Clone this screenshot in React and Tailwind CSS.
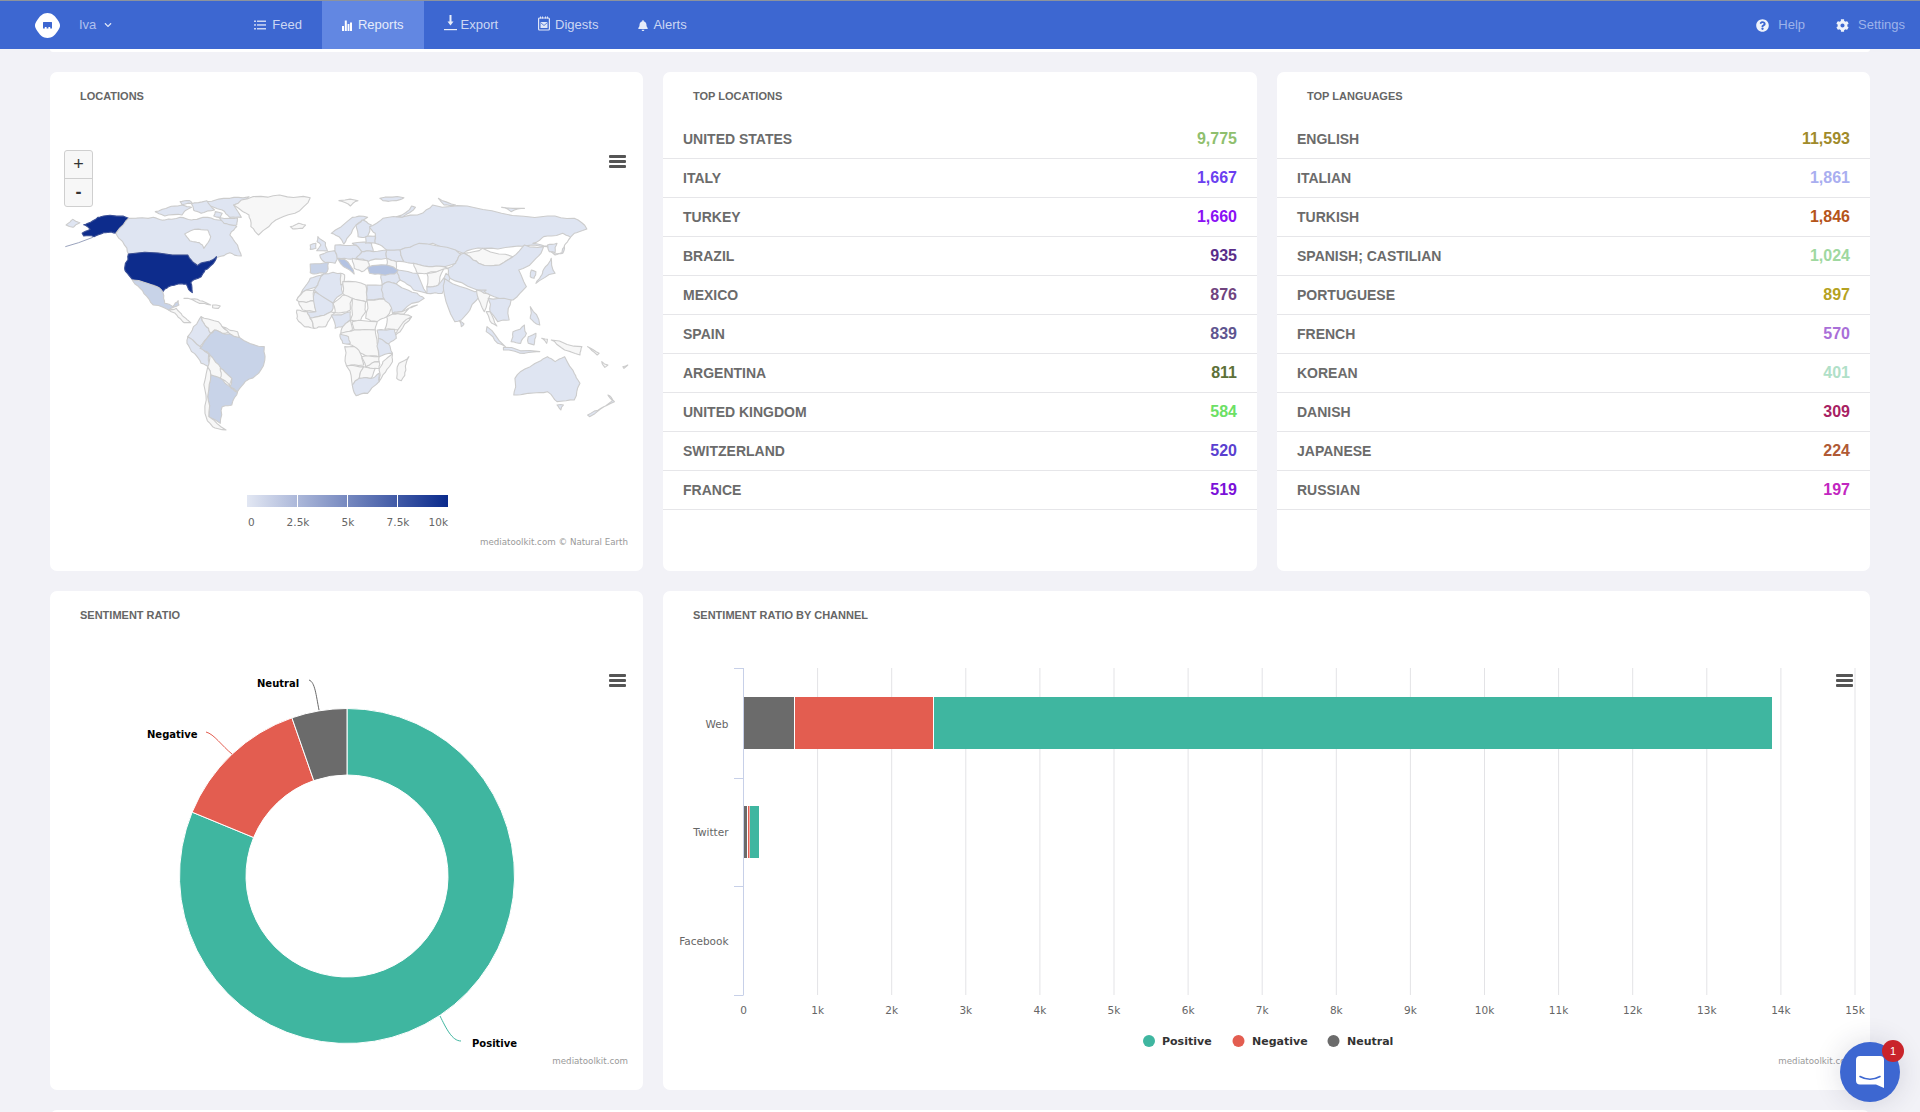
import React from "react";
import { FaBell, FaCog, FaQuestionCircle, FaChevronDown } from "react-icons/fa";

const D = "#f7f7f7", L = "#dfe5f2", M = "#c8d3e8", H = "#b4c3e2", U = "#0d2c8c", W = "#ffffff";

const LAND = [
  [U, "140,258 205,265 172,310 160,306 140,308 115,320 88,318 84,310 105,298 88,284 112,272 125,262"],
  [L, "42,285 60,268 78,278 60,292"],
  [L, "205,265 270,262 300,270 340,262 370,270 400,262 440,270 470,275 488,290 470,315 490,345 500,378 470,368 438,382 420,400 385,408 372,395 360,375 205,372 190,335 172,310"],
  [W, "352,312 378,298 412,300 420,320 402,355 390,338 365,332"],
  [L, "410,215 470,205 520,200 480,225 500,262 470,262 450,240 405,225"],
  [L, "275,245 310,232 345,225 370,232 345,255 300,258"],
  [L, "370,222 410,212 430,240 395,250 375,240"],
  [L, "440,262 490,264 488,285 455,280"],
  [L, "340,215 365,212 372,220 345,224"],
  [L, "432,245 450,250 445,262 428,258"],
  [D, "480,225 530,200 600,195 680,203 640,250 590,270 545,315 525,290 520,255"],
  [D, "628,290 650,280 668,285 660,295 635,297"],
  [U, "205,372 360,375 372,395 385,407 410,395 435,380 430,395 405,420 395,440 368,458 372,488 362,478 356,462 335,462 310,470 295,485 272,465 235,458 215,448 198,425 197,400"],
  [M, "215,450 272,467 295,487 300,520 320,530 335,512 337,525 310,540 270,525 245,490 222,462"],
  [D, "310,540 330,535 340,548 355,565 368,578 350,578 335,562"],
  [D, "350,505 385,508 420,525 390,520"],
  [D, "425,525 445,528 440,535 425,533"],
  [L, "375,590 395,560 405,585 420,610 410,625 392,650 360,620 372,600"],
  [D, "395,560 440,575 450,590 470,605 450,610 430,600 420,610 405,585"],
  [D, "450,590 490,605 495,622 470,612 465,605"],
  [L, "360,620 392,650 415,672 415,712 395,700 370,665 358,640"],
  [M, "392,655 410,625 430,600 450,610 470,612 495,622 560,650 562,680 545,730 510,755 490,785 470,770 475,745 445,715 415,670"],
  [D, "415,672 445,712 465,745 420,735 412,712"],
  [D, "445,715 475,745 470,768 445,745"],
  [D, "470,772 490,785 478,797 470,785"],
  [M, "420,735 445,745 470,770 490,787 475,825 450,830 445,880 415,860 412,800"],
  [D, "412,712 420,735 412,800 415,860 460,900 425,890 405,850 405,780"],
  [L, "680,445 715,432 700,465 670,480 645,510 660,480"],
  [L, "715,432 760,430 765,490 740,520 700,490 690,480 700,465"],
  [D, "760,430 770,435 768,460 760,465"],
  [D, "765,455 825,465 828,515 800,510 765,490"],
  [L, "828,465 870,465 905,505 828,510"],
  [D, "645,510 670,480 690,480 692,512 650,515"],
  [D, "650,515 692,512 695,545 660,540"],
  [L, "692,485 740,520 735,545 700,560 680,565 672,545 695,545"],
  [D, "740,520 765,495 790,505 785,540 745,548"],
  [D, "790,505 825,515 825,545 810,575 785,570"],
  [D, "828,510 905,508 880,560 855,575 825,565"],
  [D, "880,560 910,550 945,560 910,600 875,598"],
  [D, "945,560 915,605 890,625 910,598"],
  [D, "645,540 672,545 680,565 690,595 665,590 645,565"],
  [D, "680,565 700,560 735,545 745,548 735,560 720,590 690,595"],
  [L, "735,555 785,545 785,570 765,590 745,595"],
  [D, "765,590 785,570 790,600 760,610"],
  [D, "790,575 855,575 850,600 795,600"],
  [D, "760,610 795,600 850,600 855,640 860,680 830,680 795,650 770,640"],
  [L, "758,612 780,620 785,640 765,640"],
  [L, "855,600 900,598 905,625 885,642 858,625"],
  [L, "858,625 885,642 895,670 860,680"],
  [D, "770,650 795,650 815,680 820,705 775,708"],
  [D, "815,680 860,680 860,695 825,710"],
  [D, "895,670 895,695 870,735 860,755 860,720 870,695"],
  [D, "775,708 820,710 808,745 790,765"],
  [D, "820,710 850,715 840,745 808,745"],
  [D, "825,710 860,695 860,715 850,715"],
  [L, "790,765 808,745 840,745 860,730 860,755 830,790 800,797"],
  [D, "938,680 930,720 918,752 906,745 912,700"],
  [M, "680,402 728,396 720,430 690,432 680,428"],
  [L, "705,375 745,362 752,385 745,400 720,398"],
  [L, "700,320 720,338 725,362 697,362 708,345 698,335"],
  [L, "680,345 695,340 695,355 680,358"],
  [H, "752,385 770,388 795,432 770,412"],
  [L, "735,310 790,262 830,262 800,285 780,320 768,342 755,320"],
  [L, "815,270 840,285 830,320 805,320 800,285"],
  [L, "745,345 800,345 815,365 800,385 770,385 750,385 745,365"],
  [L, "790,340 840,340 845,365 815,365 800,345"],
  [L, "825,320 850,318 850,340 825,340"],
  [L, "815,365 845,365 880,360 880,385 830,395 800,385"],
  [D, "790,385 830,392 835,410 815,425 795,415"],
  [L, "835,290 870,265 960,255 1000,225 1090,228 1180,250 1300,258 1370,265 1403,297 1370,310 1345,340 1340,370 1320,375 1300,350 1260,345 1210,350 1130,355 1080,370 1000,340 960,350 915,360 880,360 850,340 850,310"],
  [W, "1262,340 1290,320 1340,310 1360,322 1345,345 1338,368 1318,372 1300,348"],
  [L, "905,260 945,228 955,232 920,262"],
  [L, "1015,205 1060,225 1030,225"],
  [D, "755,212 805,212 785,228"],
  [L, "862,205 925,203 905,212 870,212"],
  [L, "1180,232 1240,235 1205,245"],
  [L, "880,360 915,360 925,395 905,395 880,385"],
  [L, "915,360 965,340 1060,360 1075,372 1060,400 1000,410 950,400 925,395"],
  [D, "1082,370 1130,355 1210,380 1175,405 1120,400"],
  [L, "1075,372 1082,370 1120,400 1175,405 1210,380 1240,345 1290,350 1270,385 1225,420 1245,470 1210,510 1150,495 1105,475 1045,445 1040,415 1060,400"],
  [D, "880,385 905,395 905,420 880,405"],
  [L, "905,420 960,430 985,490 950,480 915,450"],
  [D, "985,430 1030,415 1015,465 985,470"],
  [L, "985,470 1015,465 1035,430 1045,445 1025,490 985,490"],
  [L, "865,435 905,425 915,450 905,462 885,455 868,465"],
  [L, "868,465 885,455 905,462 960,490 978,505 920,545 895,550 870,500"],
  [D, "895,550 920,545 960,525 925,552"],
  [D, "950,400 1000,410 1040,415 985,430 960,430"],
  [H, "830,412 880,405 910,420 900,432 860,432 835,430"],
  [L, "1030,445 1110,485 1140,480 1115,510 1075,570 1058,575 1030,490"],
  [L, "1070,572 1082,582 1075,590"],
  [D, "1115,480 1150,495 1135,545 1125,520"],
  [L, "1145,505 1205,510 1200,570 1170,575 1150,545"],
  [D, "1140,545 1150,545 1168,588 1155,580"],
  [L, "1142,590 1190,650 1170,640 1140,605"],
  [L, "1185,652 1280,665 1240,670 1185,660"],
  [L, "1210,605 1240,585 1245,610 1230,640 1205,635"],
  [L, "1250,620 1270,610 1265,645 1250,640"],
  [D, "1285,625 1300,628 1298,640"],
  [D, "1310,630 1390,650 1385,675 1345,660"],
  [L, "1255,530 1280,585 1255,565"],
  [L, "1295,410 1310,385 1320,430 1270,460 1285,435"],
  [L, "1300,345 1325,340 1320,368 1305,365"],
  [L, "1258,420 1270,425 1265,445 1255,440"],
  [L, "1215,745 1255,710 1300,680 1320,695 1345,680 1370,730 1385,760 1370,810 1325,815 1300,785 1250,790 1212,795"],
  [L, "1325,825 1342,825 1335,840"],
  [L, "1405,855 1440,835 1475,815 1458,795 1470,812 1410,860"],
  [D, "1497,710 1510,705 1500,715"],
  [D, "1405,650 1435,670 1430,675"],
  [D, "1442,695 1458,705 1450,712"],
];

function wobble(x0, y0, x1, y1, level) {
  const len = Math.hypot(x1 - x0, y1 - y0);
  if (level === 0 || len < 10) return [];
  const swap = x0 > x1 || (x0 === x1 && y0 > y1);
  const [ax, ay, bx, by] = swap ? [x1, y1, x0, y0] : [x0, y0, x1, y1];
  const h = Math.sin(ax * 12.9898 + ay * 78.233 + bx * 37.719 + by * 11.135) * 43758.5453;
  const f = h - Math.floor(h);
  const g = (f * 97.13) % 1;
  const amp = Math.min(len * 0.1, 5);
  const mx = (x0 + x1) / 2 + (f - 0.5) * 2 * amp;
  const my = (y0 + y1) / 2 + (g - 0.5) * 2 * amp;
  return [...wobble(x0, y0, mx, my, level - 1), [mx, my], ...wobble(mx, my, x1, y1, level - 1)];
}

function roughen(points) {
  const pts = points.split(" ").map((p) => p.split(",").map(Number));
  const out = [];
  pts.forEach((p, i) => {
    const q = pts[(i + 1) % pts.length];
    out.push(p, ...wobble(p[0], p[1], q[0], q[1], 2));
  });
  return out.map(([x, y]) => `${x.toFixed(1)},${y.toFixed(1)}`).join(" ");
}

const LOCATIONS = [
  ["UNITED STATES", "9,775", "text-[#8fbf6e]"],
  ["ITALY", "1,667", "text-[#6a3ff0]"],
  ["TURKEY", "1,660", "text-[#8a10f5]"],
  ["BRAZIL", "935", "text-[#5a2d8a]"],
  ["MEXICO", "876", "text-[#70447f]"],
  ["SPAIN", "839", "text-[#5f5590]"],
  ["ARGENTINA", "811", "text-[#5d7038]"],
  ["UNITED KINGDOM", "584", "text-[#6ce065]"],
  ["SWITZERLAND", "520", "text-[#5a3fd0]"],
  ["FRANCE", "519", "text-[#7a10d8]"],
];
const LANGUAGES = [
  ["ENGLISH", "11,593", "text-[#a08a2a]"],
  ["ITALIAN", "1,861", "text-[#a9aef0]"],
  ["TURKISH", "1,846", "text-[#b5541a]"],
  ["SPANISH; CASTILIAN", "1,024", "text-[#9fd8a0]"],
  ["PORTUGUESE", "897", "text-[#b5a21f]"],
  ["FRENCH", "570", "text-[#a96fd8]"],
  ["KOREAN", "401", "text-[#b0e0c8]"],
  ["DANISH", "309", "text-[#a81f63]"],
  ["JAPANESE", "224", "text-[#b05a35]"],
  ["RUSSIAN", "197", "text-[#c226c0]"],
];

function Card({ title, className = "", children }) {
  return (
    <section className={`relative flex flex-col bg-white rounded-[7px] overflow-hidden ${className}`}>
      <h2 className="h-[48px] shrink-0 flex items-center pl-[30px] text-[11px] font-bold text-[#666]">{title}</h2>
      {children}
    </section>
  );
}

function Table({ title, rows }) {
  return (
    <Card title={title}>
      <ul>
        {rows.map(([name, value, color]) => (
          <li key={name} className="h-[39px] flex items-center justify-between pl-[20px] pr-[20px] border-b border-[#e6e6e9]">
            <span className="text-[14px] font-bold text-[#6b6b6b]">{name}</span>
            <span className={`text-[16px] font-bold ${color}`}>{value}</span>
          </li>
        ))}
      </ul>
    </Card>
  );
}

function Burger({ className }) {
  return (
    <div className={`absolute flex flex-col justify-between w-[17px] h-[13px] ${className}`}>
      <span className="block h-[3px] rounded-[1px] bg-[#555]" />
      <span className="block h-[3px] rounded-[1px] bg-[#555]" />
      <span className="block h-[3px] rounded-[1px] bg-[#555]" />
    </div>
  );
}

const chartText = "font-['DejaVu_Sans','Liberation_Sans',sans-serif]";

function MapChart() {
  const ticks = [297, 347, 397];
  return (
    <div className="relative flex-1">
      <svg viewBox="0 0 593 451" className="block w-full h-full">
        <defs>
          <linearGradient id="scale" x1="0" x2="1" y1="0" y2="0">
            <stop offset="0" stopColor="#e2e7f3" />
            <stop offset="1" stopColor="#0a2a8c" />
          </linearGradient>
        </defs>
        <g transform="translate(-50,-120)">
          <g transform="translate(50,130) scale(0.38265,0.33333)">
            {LAND.map(([fill, pts], i) => (
              <polygon key={i} points={roughen(pts)} fill={fill} stroke={fill === U ? "#3a4f96" : "#cccccc"} strokeWidth="1.1" vectorEffect="non-scaling-stroke" strokeLinejoin="round" />
            ))}
            <polyline points="40,350 75,338 112,322" fill="none" stroke="#9aa3bd" strokeWidth="1" vectorEffect="non-scaling-stroke" />
          </g>
          <rect x="247" y="495" width="201" height="12" fill="url(#scale)" />
          {ticks.map((x) => (
            <rect key={x} x={x} y="495" width="1" height="12" fill="#ffffff" />
          ))}
          <text x="248" y="526" className={`${chartText} text-[10.5px] fill-[#666]`}>0</text>
          <text x="298" y="526" textAnchor="middle" className={`${chartText} text-[10.5px] fill-[#666]`}>2.5k</text>
          <text x="348" y="526" textAnchor="middle" className={`${chartText} text-[10.5px] fill-[#666]`}>5k</text>
          <text x="398" y="526" textAnchor="middle" className={`${chartText} text-[10.5px] fill-[#666]`}>7.5k</text>
          <text x="448" y="526" textAnchor="end" className={`${chartText} text-[10.5px] fill-[#666]`}>10k</text>
          <text x="628" y="545" textAnchor="end" className={`${chartText} text-[8.7px] fill-[#999]`}>mediatoolkit.com © Natural Earth</text>
        </g>
      </svg>
      <div className="absolute left-[14px] top-[30px] w-[29px] h-[57px] flex flex-col bg-[#f7f7f7] border border-[#cfcfcf] rounded-[3px] text-[#333] font-['Liberation_Sans',sans-serif]">
        <span className="h-[28px] flex items-center justify-center text-[18px] border-b border-[#cfcfcf]">+</span>
        <span className="h-[28px] flex items-center justify-center text-[18px] font-bold">-</span>
      </div>
      <Burger className="left-[559px] top-[35px]" />
    </div>
  );
}

function arc(cx, cy, R, r, a0, a1) {
  const p = (rad, a) => {
    const t = (a * Math.PI) / 180;
    return `${(cx + rad * Math.sin(t)).toFixed(2)} ${(cy - rad * Math.cos(t)).toFixed(2)}`;
  };
  const large = a1 - a0 > 180 ? 1 : 0;
  return `M${p(R, a0)}A${R} ${R} 0 ${large} 1 ${p(R, a1)}L${p(r, a1)}A${r} ${r} 0 ${large} 0 ${p(r, a0)}Z`;
}

function PieChart() {
  const lab = `${chartText} text-[10px] font-bold fill-black`;
  return (
    <div className="relative flex-1">
      <svg viewBox="0 0 593 451" className="block w-full h-full">
        <g transform="translate(-50,-639)">
          <path d={arc(347, 876, 167.5, 101, 0, 292.4)} fill="#3fb6a0" stroke="#fff" strokeWidth="1" />
          <path d={arc(347, 876, 167.5, 101, 292.4, 340.8)} fill="#e35d50" stroke="#fff" strokeWidth="1" />
          <path d={arc(347, 876, 167.5, 101, 340.8, 360)} fill="#6b6b6b" stroke="#fff" strokeWidth="1" />
          <path d="M309 680C315 682 316 695 319 710" fill="none" stroke="#6b6b6b" />
          <path d="M206 732C214 734 222 746 232 754" fill="none" stroke="#e35d50" />
          <path d="M440 1016C446 1028 452 1041 461 1041" fill="none" stroke="#3fb6a0" />
          <text x="257" y="687" className={lab}>Neutral</text>
          <text x="147" y="738" className={lab}>Negative</text>
          <text x="472" y="1047" className={lab}>Positive</text>
          <text x="628" y="1064" textAnchor="end" className={`${chartText} text-[8.7px] fill-[#999]`}>mediatoolkit.com</text>
        </g>
      </svg>
      <Burger className="left-[559px] top-[35px]" />
    </div>
  );
}

function BarChart() {
  const x0 = 743.5, step = 74.1;
  const grid = Array.from({ length: 15 }, (_, i) => i + 1);
  const lab = `${chartText} text-[10.5px] fill-[#666]`;
  const leg = `${chartText} text-[11px] font-bold fill-[#333]`;
  return (
    <div className="relative flex-1">
      <svg viewBox="0 0 1207 451" className="block w-full h-full">
        <g transform="translate(-663,-639)">
          {grid.map((k) => (
            <line key={k} x1={x0 + k * step} x2={x0 + k * step} y1="668" y2="995" stroke="#e3e3e6" />
          ))}
          <line x1={x0} x2={x0} y1="668" y2="995" stroke="#c7d0e8" />
          {[668, 778, 886, 995].map((y) => (
            <line key={y} x1="734" x2={x0} y1={y + 0.5} y2={y + 0.5} stroke="#c7d0e8" />
          ))}
          <rect x="744" y="697" width="50" height="52" fill="#6b6b6b" />
          <rect x="795" y="697" width="138" height="52" fill="#e35d50" />
          <rect x="934" y="697" width="838" height="52" fill="#3fb6a0" />
          <rect x="744" y="806" width="3" height="52" fill="#6b6b6b" />
          <rect x="748" y="806" width="1.5" height="52" fill="#e35d50" />
          <rect x="750" y="806" width="9" height="52" fill="#3fb6a0" />
          <text x="728.5" y="728" textAnchor="end" className={lab}>Web</text>
          <text x="728.5" y="836" textAnchor="end" className={lab}>Twitter</text>
          <text x="728.5" y="945" textAnchor="end" className={lab}>Facebook</text>
          {[0, ...grid].map((k) => (
            <text key={k} x={x0 + k * step} y="1014" textAnchor="middle" className={lab}>{k === 0 ? "0" : `${k}k`}</text>
          ))}
          <circle cx="1149" cy="1041" r="6" fill="#3fb6a0" />
          <text x="1162" y="1045" className={leg}>Positive</text>
          <circle cx="1238.5" cy="1041" r="6" fill="#e35d50" />
          <text x="1252" y="1045" className={leg}>Negative</text>
          <circle cx="1333.5" cy="1041" r="6" fill="#6b6b6b" />
          <text x="1347" y="1045" className={leg}>Neutral</text>
          <text x="1854" y="1064" textAnchor="end" className={`${chartText} text-[8.7px] fill-[#999]`}>mediatoolkit.com</text>
        </g>
      </svg>
      <Burger className="left-[1173px] top-[35px]" />
    </div>
  );
}

function NavLink({ icon, label, active, gap = "gap-[6px]" }) {
  return (
    <a className={`h-full flex items-center px-5 text-[13px] ${gap} ${active ? "bg-[#6287e2] text-[#e6ecfa]" : "text-[#ccd7f3]"}`}>
      {icon}
      <span>{label}</span>
    </a>
  );
}

const FeedIcon = (
  <svg width="12" height="10" viewBox="0 0 12 10" fill="currentColor">
    <rect x="0" y="0.5" width="2" height="1.5" /><rect x="3" y="0.5" width="9" height="1.5" />
    <rect x="0" y="4.2" width="2" height="1.5" /><rect x="3" y="4.2" width="9" height="1.5" />
    <rect x="0" y="8" width="2" height="1.5" /><rect x="3" y="8" width="9" height="1.5" />
  </svg>
);
const ReportsIcon = (
  <svg width="10" height="11" viewBox="0 0 10 11" fill="#ffffff">
    <rect x="0" y="6" width="2" height="5" /><rect x="2.8" y="0.5" width="2" height="10.5" />
    <rect x="5.6" y="4" width="1.8" height="7" /><rect x="8" y="2.5" width="2" height="8.5" />
  </svg>
);
const ExportIcon = (
  <svg width="13" height="16" viewBox="0 0 13 16" fill="#e8edfa" className="-mt-[4px]">
    <rect x="5.5" y="0" width="2" height="7" /><path d="M3.5 6.5h6L6.5 10.5z" />
    <rect x="0" y="14" width="13" height="1.2" />
  </svg>
);
const DigestsIcon = (
  <svg width="12" height="15" viewBox="0 0 12 15" fill="none" stroke="#e0e6f8" className="-mt-[3px]">
    <rect x="0.6" y="2" width="10.8" height="12" rx="1" strokeWidth="1.2" />
    <path d="M2.5 0.5v2M4.5 0.5v2M7.5 0.5v2M9.5 0.5v2" strokeWidth="1" />
    <rect x="2.5" y="6" width="7" height="6" fill="#e0e6f8" stroke="none" />
    <path d="M2.5 6.5l3.5 3 3.5-3" stroke="#3d67d1" strokeWidth="0.8" />
  </svg>
);

export default function App() {
  return (
    <div className="relative h-[1112px] overflow-hidden bg-[#f2f2f7] font-['Liberation_Sans',Arial,sans-serif]">
      <header className="h-[49px] flex items-stretch bg-[#3d67d1] border-t border-[#8d939c]">
        <div className="flex items-center pl-[35px]">
          <svg width="25" height="25" viewBox="0 0 25 25">
            <path d="M12.5 0C17 0 20 3 22 6C24.5 9.5 25 11 25 12.5C25 14 24.5 15.5 22 19C20 22 17 25 12.5 25C8 25 5 22 3 19C.5 15.5 0 14 0 12.5C0 11 .5 9.5 3 6C5 3 8 0 12.5 0Z" fill="#fff" />
            <path d="M8 9.5Q8 9 8.5 9H16.5Q17 9 17 9.5V15.5H15.2V14H13.4V15.5H11.6V14H9.8V15.5H8Z" fill="#3d67d1" />
          </svg>
          <span className="ml-[19px] text-[13px] text-[#b0c1ee]">Iva</span>
          <FaChevronDown className="ml-[8px] text-[#dde4f7] w-[8px] h-[8px]" />
        </div>
        <nav className="flex items-stretch ml-[122px]">
          <NavLink icon={FeedIcon} label="Feed" />
          <NavLink icon={ReportsIcon} label="Reports" active />
          <NavLink icon={ExportIcon} label="Export" gap="gap-[4px]" />
          <NavLink icon={DigestsIcon} label="Digests" gap="gap-[5px]" />
          <NavLink icon={<FaBell className="w-[10px] h-[11px] text-[#e6ecfa]" />} label="Alerts" gap="gap-[5px]" />
        </nav>
        <div className="ml-auto flex items-center pr-[15px] text-[13px] text-[#9db3ea]">
          <FaQuestionCircle className="w-[13px] h-[13px] text-[#eef2fb]" />
          <span className="ml-[9px]">Help</span>
          <FaCog className="ml-[31px] w-[13px] h-[13px] text-[#eef2fb]" />
          <span className="ml-[9px]">Settings</span>
        </div>
      </header>
      <div className="mx-[50px] h-[3px] bg-white rounded-b-[3px]" />
      <main className="mt-[20px] mx-[50px] grid grid-cols-[593px_594px_593px] grid-rows-[499px_499px_160px] gap-x-5 gap-y-5">
        <Card title="LOCATIONS"><MapChart /></Card>
        <Table title="TOP LOCATIONS" rows={LOCATIONS} />
        <Table title="TOP LANGUAGES" rows={LANGUAGES} />
        <Card title="SENTIMENT RATIO"><PieChart /></Card>
        <Card title="SENTIMENT RATIO BY CHANNEL" className="col-span-2"><BarChart /></Card>
        <div className="col-span-3 bg-white rounded-[7px]" />
      </main>
      <button className="absolute left-[1840px] top-[1042px] w-[60px] h-[60px] rounded-full bg-[#3d67d1] flex items-center justify-center shadow-[0_0_28px_rgba(40,40,70,0.16)]">
        <svg width="28" height="32" viewBox="0 0 28 32">
          <path d="M4 0H24Q28 0 28 4V32L20 28.5H4Q0 28.5 0 24.5V4Q0 0 4 0Z" fill="#fff" />
          <path d="M4 20.5Q14 26 24 20.5" fill="none" stroke="#3d67d1" strokeWidth="1.6" strokeLinecap="round" />
        </svg>
        <span className="absolute left-[42px] -top-[2px] w-[22px] h-[22px] rounded-full bg-[#c9242b] text-white text-[11px] flex items-center justify-center">1</span>
      </button>
    </div>
  );
}
